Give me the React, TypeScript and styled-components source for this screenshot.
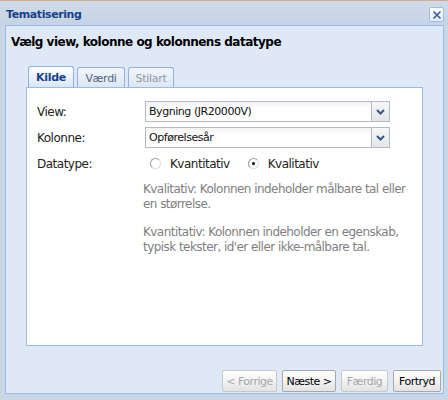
import React from "react";
import styled, { createGlobalStyle } from "styled-components";

const Global = createGlobalStyle`
  html, body { margin: 0; padding: 0; }
  body { font-family: "Liberation Sans", Arial, sans-serif; background: #c8d5e5; }
`;

const Window = styled.div`
  width: 448px;
  height: 400px;
  box-sizing: border-box;
  background: #c9d6e6;
  border-top: 1px solid #d9a98e;
  display: flex;
  flex-direction: column;
  padding: 0 4px 6px 5px;
`;

const TitleBar = styled.div`
  height: 24px;
  display: flex;
  align-items: center;
  justify-content: space-between;
  margin-left: -5px;
  margin-right: -4px;
  padding: 0 4px 0 6px;
  background: linear-gradient(#cfdbe9, #c6d3e4);
`;

const Title = styled.div`
  font-size: 11px;
  font-weight: bold;
  color: #15428b;
  font-family: "DejaVu Sans", Verdana, sans-serif;
  letter-spacing: -0.4px;
  padding-top: 2px;
`;

const CloseBtn = styled.div`
  width: 13px;
  height: 13px;
  border: 1px solid #9fbbe0;
  border-radius: 2px;
  background: linear-gradient(#ffffff, #e6eef8);
  display: flex;
  align-items: center;
  justify-content: center;
  margin-top: 3px;
`;

const Inner = styled.div`
  flex: 1;
  border: 1px solid #99bbe8;
  background: #dfe8f6;
  display: flex;
  flex-direction: column;
  padding: 0 0 1px 0;
`;

const Heading = styled.div`
  height: 40px;
  box-sizing: border-box;
  padding: 9px 0 0 5px;
  font-size: 12px;
  font-weight: bold;
  color: #000;
  font-family: "DejaVu Sans", Verdana, sans-serif;
  letter-spacing: -0.5px;
`;

const TabPanel = styled.div`
  margin-left: 20px;
  margin-right: 20px;
  height: 280px;
  display: flex;
  flex-direction: column;
`;

const TabStrip = styled.div`
  display: flex;
  gap: 3px;
  padding-left: 2px;
  height: 21px;
  align-items: flex-end;
`;

const Tab = styled.div<{ $active?: boolean; $disabled?: boolean; $w: number }>`
  height: ${(p) => (p.$active ? 21 : 20)}px;
  box-sizing: border-box;
  width: ${(p) => p.$w}px;
  border: 1px solid #8db2e3;
  border-bottom: none;
  border-radius: 3px 3px 0 0;
  background: ${(p) =>
    p.$active
      ? "linear-gradient(#ffffff, #e8f0fb 60%, #dbe6f7)"
      : "linear-gradient(#f2f5fa, #dde6f2)"};
  display: flex;
  align-items: center;
  justify-content: center;
  font-family: "DejaVu Sans", Verdana, sans-serif;
  font-size: 11px;
  letter-spacing: -0.3px;
  font-weight: ${(p) => (p.$active ? "bold" : "normal")};
  color: ${(p) => (p.$active ? "#15428b" : p.$disabled ? "#8d9aab" : "#4e6688")};
  padding-top: 1px;
`;

const TabBody = styled.div`
  flex: 1;
  background: #fff;
  border: 1px solid #99bbe8;
  padding: 13px 0 0 10px;
  display: flex;
  flex-direction: column;
  gap: 5px;
`;

const Row = styled.div`
  display: flex;
  align-items: center;
  min-height: 21px;
`;

const Label = styled.div`
  width: 108px;
  font-size: 12px;
  color: #222;
  font-family: "DejaVu Sans", Verdana, sans-serif;
  letter-spacing: -0.5px;
`;

const Combo = styled.div`
  width: 245px;
  height: 21px;
  box-sizing: border-box;
  display: flex;
  border: 1px solid #b5b8c8;
  background: linear-gradient(#f3f3f3, #ffffff 40%);
`;

const ComboText = styled.div`
  flex: 1;
  font-size: 11px;
  font-family: "DejaVu Sans", Verdana, sans-serif;
  letter-spacing: -0.45px;
  color: #111;
  padding-left: 3px;
  line-height: 19px;
`;

const ComboArrow = styled.div`
  width: 17px;
  border-left: 1px solid #b5b8c8;
  background: linear-gradient(#f7f7f7, #e4e6ea);
  display: flex;
  align-items: center;
  justify-content: center;
`;

const Radios = styled.div`
  display: flex;
  align-items: center;
  padding-left: 5px;
`;

const RadioItem = styled.label`
  display: flex;
  align-items: center;
  font-size: 12px;
  font-family: "DejaVu Sans", Verdana, sans-serif;
  letter-spacing: -0.5px;
  color: #222;
  margin-right: 18px;
`;

const RadioCircle = styled.span<{ $on?: boolean }>`
  width: 9px;
  height: 9px;
  border-radius: 50%;
  border: 1px solid #9a9a9a;
  border-right-color: #dcdcdc;
  border-bottom-color: #dcdcdc;
  background: #fff;
  display: inline-flex;
  align-items: center;
  justify-content: center;
  margin-right: 9px;
  &::after {
    content: "";
    width: 3px;
    height: 3px;
    border-radius: 50%;
    background: ${(p) => (p.$on ? "#000" : "transparent")};
  }
`;

const Help = styled.div`
  margin-left: 106px;
  margin-top: 3px;
  font-size: 12px;
  font-family: "DejaVu Sans", Verdana, sans-serif;
  letter-spacing: -0.55px;
  color: #808080;
  line-height: 15px;
  width: 270px;
  display: flex;
  flex-direction: column;
  gap: 13px;
`;

const Footer = styled.div`
  margin-top: auto;
  display: flex;
  justify-content: flex-end;
  gap: 5px;
  padding-right: 2px;
`;

const Button = styled.div<{ $disabled?: boolean; $w: number }>`
  width: ${(p) => p.$w}px;
  height: 22px;
  box-sizing: border-box;
  border: 1px solid ${(p) => (p.$disabled ? "#c8c8c8" : "#a8a8a8")};
  border-radius: 2px;
  background: linear-gradient(#ffffff, #f2f2f2 50%, #e3e3e3);
  display: flex;
  align-items: center;
  justify-content: center;
  font-size: 11px;
  font-family: "DejaVu Sans", Verdana, sans-serif;
  letter-spacing: -0.5px;
  color: ${(p) => (p.$disabled ? "#a6a6a6" : "#000")};
`;

const Chevron = () => (
  <svg width="9" height="6" viewBox="0 0 9 6">
    <path d="M1 1 L4.5 4.5 L8 1" fill="none" stroke="#36578f" strokeWidth="2" />
  </svg>
);

export default function App() {
  return (
    <>
      <Global />
      <Window>
        <TitleBar>
          <Title>Tematisering</Title>
          <CloseBtn>
            <svg width="10" height="10" viewBox="0 0 10 10">
              <path d="M1.5 1.5 L8.5 8.5 M8.5 1.5 L1.5 8.5" stroke="#3b5a9c" strokeWidth="1.6" />
            </svg>
          </CloseBtn>
        </TitleBar>
        <Inner>
          <Heading>Vælg view, kolonne og kolonnens datatype</Heading>
          <TabPanel>
            <TabStrip>
              <Tab $active $w={46}>Kilde</Tab>
              <Tab $w={48}>Værdi</Tab>
              <Tab $disabled $w={46}>Stilart</Tab>
            </TabStrip>
            <TabBody>
              <Row>
                <Label>View:</Label>
                <Combo>
                  <ComboText>Bygning (JR20000V)</ComboText>
                  <ComboArrow><Chevron /></ComboArrow>
                </Combo>
              </Row>
              <Row>
                <Label>Kolonne:</Label>
                <Combo>
                  <ComboText>Opførelsesår</ComboText>
                  <ComboArrow><Chevron /></ComboArrow>
                </Combo>
              </Row>
              <Row>
                <Label>Datatype:</Label>
                <Radios>
                  <RadioItem><RadioCircle />Kvantitativ</RadioItem>
                  <RadioItem><RadioCircle $on />Kvalitativ</RadioItem>
                </Radios>
              </Row>
              <Help>
                <div>Kvalitativ: Kolonnen indeholder målbare tal eller en størrelse.</div>
                <div>Kvantitativ: Kolonnen indeholder en egenskab, typisk tekster, id'er eller ikke-målbare tal.</div>
              </Help>
            </TabBody>
          </TabPanel>
          <Footer>
            <Button $disabled $w={55}>&lt; Forrige</Button>
            <Button $w={54}>Næste &gt;</Button>
            <Button $disabled $w={47}>Færdig</Button>
            <Button $w={48}>Fortryd</Button>
          </Footer>
        </Inner>
      </Window>
    </>
  );
}
